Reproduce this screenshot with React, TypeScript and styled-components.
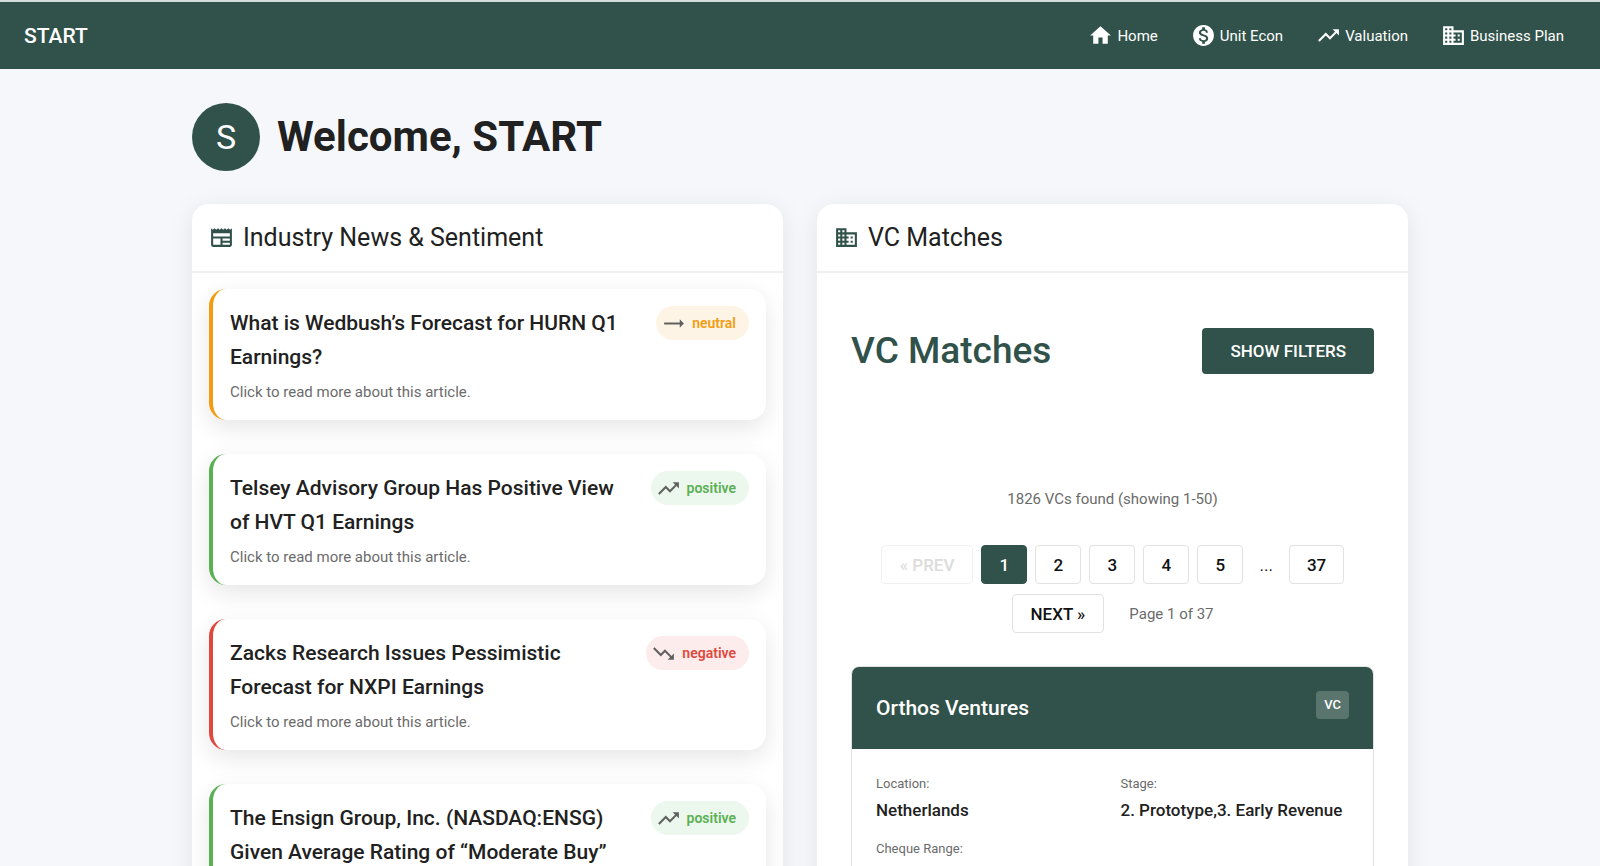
import React from "react";
import styled, { createGlobalStyle } from "styled-components";
import {
  MdBusiness,
  MdHome,
  MdMonetizationOn,
  MdNewspaper,
  MdTrendingDown,
  MdTrendingFlat,
  MdTrendingUp,
} from "react-icons/md";
import type { IconType } from "react-icons";

const green = "#31524a";
const ink = "#212121";
const muted = "#6b6b6b";

const GlobalStyle = createGlobalStyle`
  *, *::before, *::after { box-sizing: border-box; }
  body {
    margin: 0;
    background: #f5f7fb;
    color: ${ink};
    font-family: Roboto, "Liberation Sans", sans-serif;
    font-size: 15px;
  }
  h1, h2, h3, p, ul, dl, dd { margin: 0; padding: 0; }
  button { font-family: inherit; cursor: pointer; }
`;

const TopBar = styled.header`
  display: flex;
  align-items: center;
  justify-content: space-between;
  height: 69px;
  padding: 0 24px;
  border-top: 2px solid #d3dcda;
  background: ${green};
  color: #fff;
`;

const Brand = styled.a`
  color: inherit;
  font-size: 21px;
  font-weight: 500;
  text-decoration: none;
`;

const Nav = styled.nav`
  display: flex;
  gap: 9px;
`;

const NavLink = styled.a`
  display: flex;
  align-items: center;
  gap: 4px;
  padding: 8px 12px;
  color: inherit;
  font-size: 15px;
  text-decoration: none;
`;

const Page = styled.main`
  max-width: 1216px;
  margin: 0 auto;
  padding: 34px 0;
`;

const Greeting = styled.div`
  display: flex;
  align-items: center;
  gap: 17px;
  margin-bottom: 33px;
`;

const Avatar = styled.div`
  display: flex;
  align-items: center;
  justify-content: center;
  width: 68px;
  height: 68px;
  border-radius: 50%;
  background: ${green};
  color: #fff;
  font-size: 34px;
`;

const Welcome = styled.h1`
  font-size: 42px;
  font-weight: 700;
  line-height: 52px;
`;

const Columns = styled.div`
  display: grid;
  grid-template-columns: 1fr 1fr;
  gap: 34px;
`;

const Panel = styled.section`
  display: flex;
  flex-direction: column;
  border-radius: 17px;
  background: #fff;
  box-shadow: 0 4px 25px rgba(0, 0, 0, 0.08);
  overflow: hidden;
`;

const PanelHeader = styled.div`
  display: flex;
  align-items: center;
  gap: 9px;
  height: 69px;
  padding: 0 17px;
  border-bottom: 2px solid #f0f0f0;

  svg { color: ${green}; }
`;

const PanelTitle = styled.h2`
  font-size: 25px;
  font-weight: 400;
  line-height: 34px;
`;

const NewsList = styled.ul`
  display: flex;
  flex-direction: column;
  gap: 34px;
  padding: 16px 17px 34px;
  list-style: none;
`;

type Mood = "neutral" | "positive" | "negative";

const moods: Record<Mood, { icon: IconType; color: string; tint: string }> = {
  neutral: { icon: MdTrendingFlat, color: "#f39c12", tint: "#fef4e5" },
  positive: { icon: MdTrendingUp, color: "#5bb054", tint: "#ecf7ed" },
  negative: { icon: MdTrendingDown, color: "#e0483e", tint: "#fdecec" },
};

const NewsCard = styled.li<{ $mood: Mood }>`
  display: flex;
  align-items: flex-start;
  justify-content: space-between;
  gap: 17px;
  padding: 17px;
  border-left: 4px solid ${(p) => moods[p.$mood].color};
  border-radius: 17px;
  background: #fff;
  box-shadow: 0 8px 25px rgba(0, 0, 0, 0.1);
`;

const NewsText = styled.div`
  flex: 1;
`;

const NewsTitle = styled.h3`
  margin-bottom: 8px;
  font-size: 21px;
  font-weight: 500;
  line-height: 34px;
`;

const NewsHint = styled.p`
  color: ${muted};
  font-size: 15px;
  line-height: 21px;
`;

const MoodPill = styled.span<{ $mood: Mood }>`
  display: flex;
  align-items: center;
  gap: 6px;
  height: 34px;
  padding: 0 13px 0 5px;
  border-radius: 17px;
  background: ${(p) => moods[p.$mood].tint};
  color: ${(p) => moods[p.$mood].color};
  font-size: 14px;
  font-weight: 600;

  svg { color: #616161; }
`;

const Matches = styled.div`
  display: flex;
  flex: 1;
  flex-direction: column;
  padding: 55px 34px 34px;
`;

const MatchesHead = styled.div`
  display: flex;
  align-items: center;
  justify-content: space-between;
`;

const MatchesTitle = styled.h2`
  color: ${green};
  font-size: 37px;
  font-weight: 500;
  line-height: 46px;
`;

const FilterButton = styled.button`
  height: 46px;
  padding: 0 28px;
  border: 0;
  border-radius: 4px;
  background: ${green};
  color: #fff;
  font-size: 17px;
  font-weight: 500;
`;

const Count = styled.p`
  margin: 115px 0 35px;
  color: ${muted};
  line-height: 21px;
  text-align: center;
`;

const Pager = styled.nav`
  display: flex;
  flex-wrap: wrap;
  align-items: center;
  justify-content: center;
  gap: 10px 8px;
  padding: 0 17px;
`;

const PageButton = styled.button<{ $current?: boolean }>`
  min-width: 46px;
  height: 39px;
  padding: 0 17px;
  border: 1px solid ${(p) => (p.$current ? green : "#e2e2e2")};
  border-radius: 4px;
  background: ${(p) => (p.$current ? green : "#fff")};
  color: ${(p) => (p.$current ? "#fff" : "#111")};
  font-size: 17px;
  font-weight: 500;

  &:disabled {
    border-color: #f1f1f1;
    color: #dcdcdc;
    cursor: default;
  }
`;

const StepButton = styled(PageButton)`
  padding: 0 18px;
`;

const Ellipsis = styled.span`
  padding: 0 8px;
  font-size: 17px;
`;

const PageInfo = styled.span`
  margin-left: 17px;
  color: ${muted};
`;

const Investor = styled.article`
  flex: 1;
  margin-top: 33px;
  border: 1px solid #e2e2e2;
  border-radius: 8px;
  overflow: hidden;
`;

const InvestorHead = styled.div`
  display: flex;
  align-items: flex-start;
  justify-content: space-between;
  padding: 24px;
  background: ${green};
  color: #fff;
`;

const InvestorName = styled.h3`
  font-size: 21px;
  font-weight: 500;
  line-height: 34px;
`;

const Tag = styled.span`
  padding: 0 8px;
  border-radius: 4px;
  background: rgba(255, 255, 255, 0.2);
  font-size: 13px;
  font-weight: 500;
  line-height: 28px;
`;

const Facts = styled.dl`
  display: grid;
  grid-template-columns: 1fr 1fr;
  gap: 16px;
  padding: 24px;
`;

const FactLabel = styled.dt`
  color: ${muted};
  font-size: 13px;
  line-height: 21px;
`;

const FactValue = styled.dd`
  margin-top: 4px;
  font-size: 17px;
  font-weight: 500;
  line-height: 24px;
`;

const links: { label: string; icon: IconType }[] = [
  { label: "Home", icon: MdHome },
  { label: "Unit Econ", icon: MdMonetizationOn },
  { label: "Valuation", icon: MdTrendingUp },
  { label: "Business Plan", icon: MdBusiness },
];

const news: { title: string; mood: Mood }[] = [
  { title: "What is Wedbush’s Forecast for HURN Q1 Earnings?", mood: "neutral" },
  { title: "Telsey Advisory Group Has Positive View of HVT Q1 Earnings", mood: "positive" },
  { title: "Zacks Research Issues Pessimistic Forecast for NXPI Earnings", mood: "negative" },
  { title: "The Ensign Group, Inc. (NASDAQ:ENSG) Given Average Rating of “Moderate Buy”", mood: "positive" },
];

function NewsItem({ title, mood }: { title: string; mood: Mood }) {
  const Icon = moods[mood].icon;
  return (
    <NewsCard $mood={mood}>
      <NewsText>
        <NewsTitle>{title}</NewsTitle>
        <NewsHint>Click to read more about this article.</NewsHint>
      </NewsText>
      <MoodPill $mood={mood}>
        <Icon size={25} />
        {mood}
      </MoodPill>
    </NewsCard>
  );
}

export default function App() {
  return (
    <>
      <GlobalStyle />
      <TopBar>
        <Brand href="#">START</Brand>
        <Nav>
          {links.map(({ label, icon: Icon }) => (
            <NavLink href="#" key={label}>
              <Icon size={25} />
              {label}
            </NavLink>
          ))}
        </Nav>
      </TopBar>
      <Page>
        <Greeting>
          <Avatar>S</Avatar>
          <Welcome>Welcome, START</Welcome>
        </Greeting>
        <Columns>
          <Panel>
            <PanelHeader>
              <MdNewspaper size={25} />
              <PanelTitle>Industry News &amp; Sentiment</PanelTitle>
            </PanelHeader>
            <NewsList>
              {news.map((item) => (
                <NewsItem key={item.title} {...item} />
              ))}
            </NewsList>
          </Panel>
          <Panel>
            <PanelHeader>
              <MdBusiness size={25} />
              <PanelTitle>VC Matches</PanelTitle>
            </PanelHeader>
            <Matches>
              <MatchesHead>
                <MatchesTitle>VC Matches</MatchesTitle>
                <FilterButton type="button">SHOW FILTERS</FilterButton>
              </MatchesHead>
              <Count>1826 VCs found (showing 1-50)</Count>
              <Pager aria-label="Pages">
                <StepButton disabled>« PREV</StepButton>
                {[1, 2, 3, 4, 5].map((n) => (
                  <PageButton key={n} $current={n === 1}>
                    {n}
                  </PageButton>
                ))}
                <Ellipsis>...</Ellipsis>
                <PageButton>37</PageButton>
                <StepButton>NEXT »</StepButton>
                <PageInfo>Page 1 of 37</PageInfo>
              </Pager>
              <Investor>
                <InvestorHead>
                  <InvestorName>Orthos Ventures</InvestorName>
                  <Tag>VC</Tag>
                </InvestorHead>
                <Facts>
                  <div>
                    <FactLabel>Location:</FactLabel>
                    <FactValue>Netherlands</FactValue>
                  </div>
                  <div>
                    <FactLabel>Stage:</FactLabel>
                    <FactValue>2. Prototype,3. Early Revenue</FactValue>
                  </div>
                  <div>
                    <FactLabel>Cheque Range:</FactLabel>
                  </div>
                </Facts>
              </Investor>
            </Matches>
          </Panel>
        </Columns>
      </Page>
    </>
  );
}
